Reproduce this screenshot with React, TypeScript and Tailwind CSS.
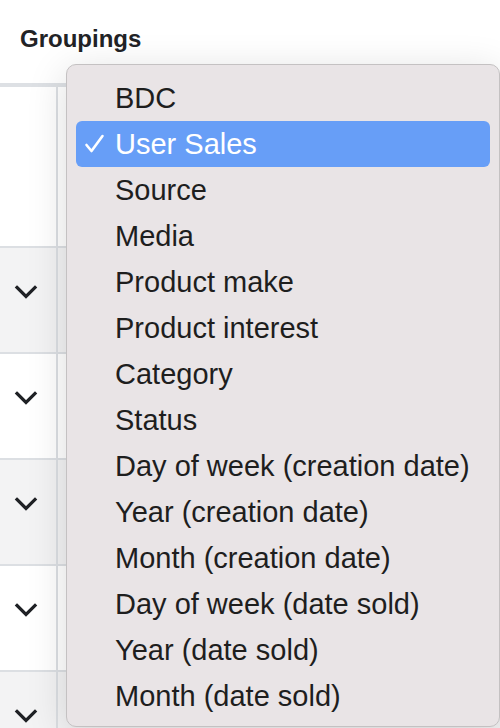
const options = [
  "BDC",
  "User Sales",
  "Source",
  "Media",
  "Product make",
  "Product interest",
  "Category",
  "Status",
  "Day of week (creation date)",
  "Year (creation date)",
  "Month (creation date)",
  "Day of week (date sold)",
  "Year (date sold)",
  "Month (date sold)",
];

function Chevron() {
  return (
    <svg width="24" height="16" viewBox="0 0 24 16" fill="none" className="text-[#1f2125]">
      <path d="M3 3.5 L12 12.5 L21 3.5" stroke="currentColor" strokeWidth="3.2" strokeLinecap="square" strokeLinejoin="miter" />
    </svg>
  );
}

function Check() {
  return (
    <svg width="22" height="22" viewBox="0 0 22 22" fill="none">
      <path d="M2.5 12 L7.5 18 L18.5 3" stroke="white" strokeWidth="2.6" strokeLinecap="round" strokeLinejoin="round" />
    </svg>
  );
}

export default function App() {
  const selected = "User Sales";
  const rows = [0, 1, 2, 3, 4];

  return (
    <div
      className="relative h-[728px] w-[500px] overflow-hidden bg-white text-[#1e1e1e]"
      style={{ fontFamily: '"Liberation Sans", Arial, sans-serif' }}
    >
      <div className="h-[83px] pl-5 pt-[27px]">
        <h2 className="text-[24px] font-bold leading-[24px] text-[#222326]">Groupings</h2>
      </div>
      <div className="border-t-4 border-[#dde0e4]">
        <div className="flex h-[161px] border-b-2 border-[#dcdfe3]">
          <div className="w-[58px] border-r-2 border-[#dcdfe3]" />
          <div className="flex-1" />
        </div>
        {rows.map((r) => (
          <div
            key={r}
            className={`flex h-[106px] border-b-2 border-[#dcdfe3] ${r % 2 === 0 ? "bg-[#f3f3f4]" : "bg-white"}`}
          >
            <div className="flex w-[58px] justify-start border-r-2 border-[#dcdfe3] pl-[14px] pt-[36px]">
              <div className="h-4">
                <Chevron />
              </div>
            </div>
            <div className="flex-1" />
          </div>
        ))}
      </div>

      <div className="absolute left-[66px] top-[64px] w-[434px] rounded-[10px] border border-[#c4c1c2] bg-[#e9e4e6] pb-[7px] pt-[10px] shadow-[0_8px_40px_rgba(0,0,0,0.14)]">
        {options.map((o) => {
          const active = o === selected;
          return (
            <div
              key={o}
              className={`mx-[9px] flex h-[46px] items-center rounded-[6px] text-[29px] leading-[46px] ${
                active ? "bg-[#679ef7] text-white" : "text-[#1e1e1e]"
              }`}
            >
              <span className="flex w-[39px] items-center pl-[8px]">{active ? <Check /> : null}</span>
              <span className="whitespace-nowrap">{o}</span>
            </div>
          );
        })}
      </div>
    </div>
  );
}
